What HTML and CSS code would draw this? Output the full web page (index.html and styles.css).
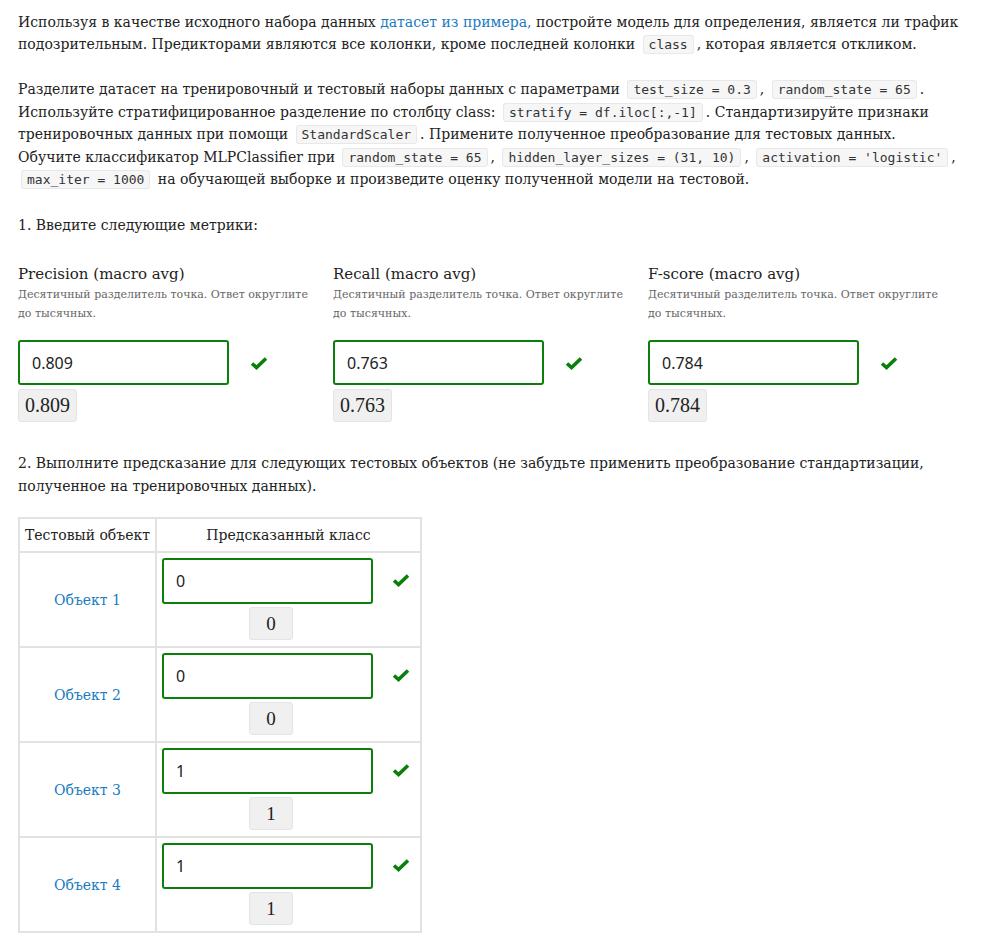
FILE: index.html
```html
<!DOCTYPE html>
<html lang="ru">
<head>
<meta charset="utf-8">
<link rel="stylesheet" href="styles.css">
</head>
<body>
<div class="page">
  <p class="para p1">Используя в качестве исходного набора данных <a class="link" href="#">датасет из примера,</a> постройте модель для определения, является ли трафик подозрительным. Предикторами являются все колонки, кроме последней колонки <code class="code">class</code>, которая является откликом.</p>
  <p class="para">Разделите датасет на тренировочный и тестовый наборы данных с параметрами <code class="code">test_size = 0.3</code>, <code class="code">random_state = 65</code>. Используйте стратифицированное разделение по столбцу class: <code class="code">stratify = df.iloc[:,-1]</code>. Стандартизируйте признаки тренировочных данных при помощи <code class="code">StandardScaler</code>. Примените полученное преобразование для тестовых данных. Обучите классификатор MLPClassifier при <code class="code">random_state = 65</code>, <code class="code">hidden_layer_sizes = (31, 10)</code>, <code class="code">activation = 'logistic'</code>, <code class="code">max_iter = 1000</code> на обучающей выборке и произведите оценку полученной модели на тестовой.</p>
  <p class="para q1">1. Введите следующие метрики:</p>

  <div class="metrics">
    <div class="metric">
      <div class="metric-label">Precision (macro avg)</div>
      <div class="metric-hint">Десятичный разделитель точка. Ответ округлите до тысячных.</div>
      <div class="answer-row">
        <div class="input">0.809</div>
        <svg class="check" viewBox="0 0 18 14" width="18" height="14"><polyline points="2,7.5 6.5,11.5 16,2.5" fill="none" stroke="#0a7f0a" stroke-width="3.6"/></svg>
      </div>
      <div class="correct">0.809</div>
    </div>
    <div class="metric">
      <div class="metric-label">Recall (macro avg)</div>
      <div class="metric-hint">Десятичный разделитель точка. Ответ округлите до тысячных.</div>
      <div class="answer-row">
        <div class="input">0.763</div>
        <svg class="check" viewBox="0 0 18 14" width="18" height="14"><polyline points="2,7.5 6.5,11.5 16,2.5" fill="none" stroke="#0a7f0a" stroke-width="3.6"/></svg>
      </div>
      <div class="correct">0.763</div>
    </div>
    <div class="metric">
      <div class="metric-label">F-score (macro avg)</div>
      <div class="metric-hint">Десятичный разделитель точка. Ответ округлите до тысячных.</div>
      <div class="answer-row">
        <div class="input">0.784</div>
        <svg class="check" viewBox="0 0 18 14" width="18" height="14"><polyline points="2,7.5 6.5,11.5 16,2.5" fill="none" stroke="#0a7f0a" stroke-width="3.6"/></svg>
      </div>
      <div class="correct">0.784</div>
    </div>
  </div>

  <p class="para q2">2. Выполните предсказание для следующих тестовых объектов (не забудьте применить преобразование стандартизации, полученное на тренировочных данных).</p>

  <table class="tbl">
    <thead>
      <tr><th class="c1">Тестовый объект</th><th class="c2">Предсказанный класс</th></tr>
    </thead>
    <tbody>
      <tr>
        <td class="c1"><a class="link" href="#">Объект 1</a></td>
        <td class="c2">
          <div class="cell">
            <div class="cell-col"><div class="input tinput">0</div><div class="correct small">0</div></div>
            <svg class="check tcheck" viewBox="0 0 18 14" width="18" height="14"><polyline points="2,7.5 6.5,11.5 16,2.5" fill="none" stroke="#0a7f0a" stroke-width="3.6"/></svg>
          </div>
        </td>
      </tr>
      <tr>
        <td class="c1"><a class="link" href="#">Объект 2</a></td>
        <td class="c2">
          <div class="cell">
            <div class="cell-col"><div class="input tinput">0</div><div class="correct small">0</div></div>
            <svg class="check tcheck" viewBox="0 0 18 14" width="18" height="14"><polyline points="2,7.5 6.5,11.5 16,2.5" fill="none" stroke="#0a7f0a" stroke-width="3.6"/></svg>
          </div>
        </td>
      </tr>
      <tr>
        <td class="c1"><a class="link" href="#">Объект 3</a></td>
        <td class="c2">
          <div class="cell">
            <div class="cell-col"><div class="input tinput">1</div><div class="correct small">1</div></div>
            <svg class="check tcheck" viewBox="0 0 18 14" width="18" height="14"><polyline points="2,7.5 6.5,11.5 16,2.5" fill="none" stroke="#0a7f0a" stroke-width="3.6"/></svg>
          </div>
        </td>
      </tr>
      <tr>
        <td class="c1"><a class="link" href="#">Объект 4</a></td>
        <td class="c2">
          <div class="cell">
            <div class="cell-col"><div class="input tinput">1</div><div class="correct small">1</div></div>
            <svg class="check tcheck" viewBox="0 0 18 14" width="18" height="14"><polyline points="2,7.5 6.5,11.5 16,2.5" fill="none" stroke="#0a7f0a" stroke-width="3.6"/></svg>
          </div>
        </td>
      </tr>
    </tbody>
  </table>
</div>
</body>
</html>
```
FILE: styles.css
```css
html, body {
  margin: 0;
  padding: 0;
  background: #ffffff;
}
body {
  font-family: "DejaVu Serif", "Liberation Serif", serif;
  font-size: 14px;
  color: #222222;
}
.page {
  padding: 11px 18px 20px 18px;
}
.para {
  margin: 0 0 23px 0;
  line-height: 22.5px;
  width: 941px;
}
.p1 {
  line-height: 22px;
}
.link {
  color: #1a7bbf;
  text-decoration: none;
}
.code {
  font-family: "DejaVu Sans Mono", "Liberation Mono", monospace;
  font-size: 13px;
  line-height: 1;
  white-space: nowrap;
  background: #f6f6f6;
  border: 1px solid #e8e8e8;
  border-radius: 3px;
  padding: 1px 5px;
  margin: 0 3px;
  color: #333333;
}
.q1 {
  margin-bottom: 27px;
}
.metrics {
  display: flex;
  gap: 15px;
}
.metric {
  width: 300px;
}
.metric-label {
  font-size: 15px;
  line-height: 22px;
  color: #222;
}
.metric-hint {
  font-size: 11px;
  line-height: 19px;
  color: #666666;
}
.answer-row {
  display: flex;
  align-items: center;
  gap: 21px;
  margin-top: 17px;
}
.input {
  box-sizing: border-box;
  width: 211px;
  height: 45px;
  border: 2px solid #0a7f0a;
  border-radius: 3px;
  padding: 0 12px;
  display: flex;
  align-items: center;
  font-family: "Noto Sans", "Open Sans", sans-serif;
  font-size: 16px;
  color: #222;
  background: #fff;
}
.check {
  display: block;
  flex: none;
}
.correct {
  display: inline-block;
  margin-top: 4px;
  background: #f0f0f0;
  border: 1px solid #e4e4e4;
  border-radius: 3px;
  padding: 0 6px;
  height: 33px;
  box-sizing: border-box;
  line-height: 31px;
  font-family: "Liberation Serif", "DejaVu Serif", serif;
  font-size: 20px;
  color: #222;
}
.q2 {
  margin-top: 30px;
  margin-bottom: 20px;
}
.tbl {
  border-collapse: collapse;
  border: 2px solid #e2e2e2;
}
.tbl th, .tbl td {
  border: 2px solid #e2e2e2;
  padding: 0;
}
.tbl th {
  font-weight: normal;
  height: 32px;
  font-size: 14px;
  text-align: center;
}
.tbl th.c1 {
  width: 135px;
}
.tbl th.c2 {
  width: 262px;
}
.tbl td.c1 {
  text-align: center;
  vertical-align: middle;
}
.tbl td.c2 {
  padding: 5px 10px 6px 5px;
}
.cell {
  display: flex;
  align-items: flex-start;
  gap: 12px;
}
.cell-col {
  width: 218px;
  display: flex;
  flex-direction: column;
  align-items: center;
}
.tinput {
  align-self: flex-start;
  height: 46px;
}
.correct.small {
  margin-top: 3px;
  width: 44px;
  text-align: center;
  font-size: 19px;
}
.tcheck {
  margin-top: 15px;
}
```
